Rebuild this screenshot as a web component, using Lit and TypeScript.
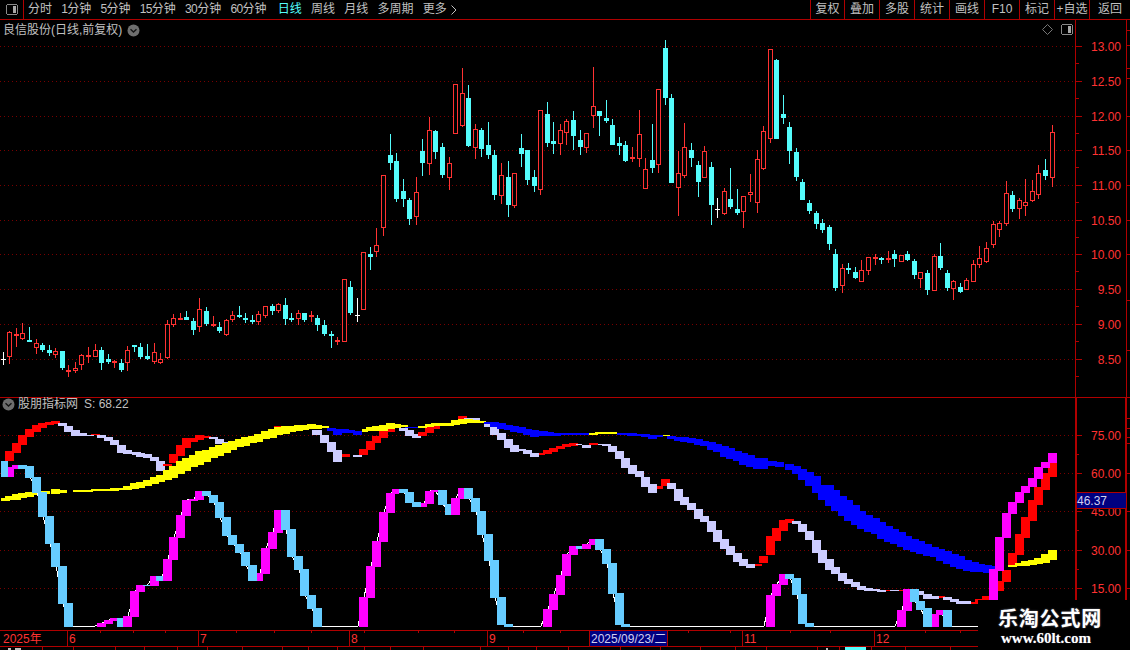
import { LitElement, html, css, svg } from "lit";
import { customElement } from "lit/decorators.js";

type C = [number, number, number, number, number, string];
// candle groups measured on 3x crops: x, body top, body bottom, wick top, wick bottom, colour
const G1: C[] = [
  [10,177,177,156,195,"w"],[28,97,170,94,192,"r"],[49,102,106,84,141,"r"],[67,99,117,69,120,"r"],[88,121,123,81,126,"c"],
  [109,130,144,117,162,"r"],[127,135,150,129,156,"c"],[148,150,160,135,168,"c"],[166,154,165,144,174,"r"],[187,153,204,153,210,"c"],
  [205,211,217,195,231,"r"],[226,205,212,186,219,"r"],[244,166,196,162,210,"r"],[265,166,171,141,189,"r"],[286,151,170,132,171,"r"],
  [304,150,189,141,210,"c"],[325,177,186,162,192,"c"],[343,184,188,180,204,"r"],[364,189,210,177,216,"c"],[382,151,190,138,213,"r"],
  [403,135,141,135,156,"c"],[421,141,171,129,177,"c"],[442,168,177,132,180,"c"],[463,157,186,129,192,"r"],[481,178,189,159,192,"r"],
  [502,72,174,60,177,"r"],[520,54,74,42,81,"r"],[541,54,57,39,60,"r"],[559,51,60,33,60,"c"],[580,63,90,54,105,"c"],
  [598,27,82,-6,96,"r"],[619,33,72,21,78,"c"],[640,72,78,48,81,"r"],[658,81,93,66,99,"c"],[679,61,105,58,108,"r"],
  [697,45,60,33,66,"r"],[718,45,51,18,54,"c"],[736,54,60,39,69,"c"],[757,60,66,45,72,"c"],[775,42,66,33,75,"r"],
  [796,18,48,18,54,"r"],[817,18,33,12,45,"c"],[835,12,33,9,39,"r"],[856,15,57,-6,75,"c"],[874,54,60,39,66,"c"],
  [895,39,57,30,75,"r"],[913,39,60,39,66,"c"],[934,45,51,33,66,"r"],[952,54,75,45,93,"c"],[973,75,102,60,108,"c"],
  [994,102,108,93,144,"c"],[1012,120,126,111,135,"r"],
];
const G2: C[] = [
  [133,178,365,178,365,"r"],[151,201,279,183,285,"c"],[172,286,286,234,306,"w"],[190,97,269,97,269,"r"],[211,102,111,81,150,"c"],[229,76,95,24,111,"r"],
];
const G3: C[] = [
  [10,436,593,436,618,"r"],[31,375,399,312,420,"c"],[49,393,507,369,516,"c"],[70,483,507,447,531,"c"],[88,510,567,504,585,"c"],
  [109,487,560,441,585,"r"],[127,363,399,327,438,"c"],[148,301,401,261,435,"r"],[166,303,366,300,387,"c"],[187,351,435,339,444,"c"],
  [208,400,443,381,480,"r"],[226,163,311,163,311,"r"],[247,190,287,114,291,"r"],[265,204,348,165,351,"c"],[286,298,353,282,387,"r"],
  [304,300,357,294,381,"c"],[325,345,375,276,387,"c"],[343,375,495,361,510,"c"],[364,436,497,399,522,"r"],[385,441,525,393,561,"c"],
  [403,430,527,430,534,"r"],[424,354,372,312,411,"c"],[442,360,450,360,465,"c"],[463,441,468,420,486,"c"],[481,241,479,241,495,"r"],
  [502,252,339,216,351,"c"],[520,333,342,276,372,"c"],[541,301,341,282,375,"r"],[559,274,308,267,345,"r"],[580,270,318,243,360,"c"],
  [601,330,351,300,375,"c"],[619,310,353,310,369,"r"],[640,229,257,111,294,"r"],[658,243,258,243,318,"c"],[679,264,273,210,279,"c"],
  [697,285,345,267,345,"c"],[718,339,348,321,375,"c"],[736,345,393,333,396,"c"],[757,382,388,351,396,"r"],[778,313,386,240,411,"r"],
  [796,418,476,384,476,"r"],[817,390,414,282,429,"c"],[835,178,404,178,429,"r"],[856,54,204,30,225,"c"],[874,204,459,193,459,"c"],
  [895,430,473,363,558,"r"],[913,352,437,279,444,"r"],[934,360,384,339,411,"c"],[955,405,456,393,501,"c"],[973,364,443,348,443,"r"],
  [994,411,525,396,585,"c"],[1012,538,538,504,564,"w"],
];
const G4: C[] = [
  [13,484,551,475,556,"r"],[31,507,531,414,537,"c"],[52,537,549,477,555,"c"],[70,499,545,499,594,"r"],[91,487,494,432,516,"r"],
  [112,388,518,361,549,"r"],[130,304,416,289,419,"r"],[151,58,328,58,339,"r"],[169,90,327,87,327,"c"],[190,252,264,195,282,"c"],
  [208,291,363,276,402,"c"],[229,366,441,354,453,"c"],[247,456,510,447,510,"c"],[268,519,543,510,552,"c"],[289,549,582,543,597,"c"],
  [307,579,600,567,609,"c"],[328,591,642,585,660,"c"],[346,672,774,657,783,"c"],[367,715,767,702,789,"r"],[385,714,720,699,732,"c"],
  [406,726,744,711,747,"c"],[424,721,755,690,755,"r"],[445,682,722,682,735,"r"],[466,681,687,672,705,"r"],[484,684,690,681,702,"c"],
  [505,684,690,663,699,"r"],[523,672,687,660,711,"c"],[544,676,695,676,695,"r"],[562,672,690,663,693,"c"],[583,693,735,687,747,"c"],
  [601,727,746,727,774,"r"],[622,729,780,720,795,"c"],[643,679,782,673,782,"r"],[661,678,714,639,720,"c"],[682,729,774,720,783,"c"],
  [700,754,777,750,810,"r"],[721,771,786,759,789,"c"],[739,751,779,745,779,"r"],[760,703,755,690,755,"r"],[778,685,704,648,714,"r"],
  [799,655,695,636,699,"r"],[820,583,644,574,654,"r"],[838,580,599,574,621,"r"],[859,490,581,453,588,"r"],[877,495,537,483,546,"c"],
  [898,511,536,505,567,"r"],[916,517,527,447,558,"r"],[937,484,512,450,516,"r"],[955,430,494,405,507,"r"],[976,420,438,387,450,"c"],
  [997,307,445,285,471,"r"],
];
const conv = (g: C[], x0: number, y0: number): C[] =>
  g.map(([x, a, b, c, d, k]) => [Math.floor(x0 + x / 3), Math.round(y0 + a / 3), Math.round(y0 + b / 3), Math.round(y0 + c / 3), Math.round(y0 + d / 3), k] as C);
const CANDLES: C[] = [...conv(G1, 0, 300), ...conv(G2, 300, 220), ...conv(G3, 380, 30), ...conv(G4, 720, 30)];

type S = [number, number, number, number];
const col = { y: "#ffff00", b: "#0000ff", r: "#ff0000", l: "#ccccff", m: "#ff00ff", s: "#66ccff" } as Record<string, string>;
const run = (k: string, rows: S[]) => rows.map((r) => [...r, k] as [number, number, number, number, string]);

const SERIES_B = [
  ...run("r", [[5,14,451,461],[12,21,443,453],[18,27,435,445],[25,34,429,437],[32,41,425,432],[38,47,423,428],[45,54,422,425],[51,60,421,424]]),
  ...run("l", [[58,67,423,426],[64,73,426,432],[71,80,430,436],[78,87,433,436],[85,94,435,436]]),
  ...run("r", [[91,100,434,435]]),
  ...run("l", [[97,106,435,438],[104,113,437,441],[110,119,440,445],[117,126,445,453],[123,132,450,454],[132,141,452,455],[136,145,453,457],[143,152,454,458],[150,159,457,461],[156,165,461,471]]),
  ...run("r", [[163,172,464,466],[169,178,454,463],[176,185,445,456],[182,191,438,448],[189,198,438,442],[195,204,435,440],[202,211,436,438]]),
  ...run("l", [[209,218,437,439],[215,224,439,444],[222,231,442,444]]),
  ...run("r", [[274,287,426,427]]),
  ...run("l", [[312,322,430,435],[320,329,435,443],[327,336,442,452],[333,342,450,462]]),
  ...run("r", [[342,350,454,457]]),
  ...run("l", [[353,362,455,457]]),
  ...run("r", [[359,368,449,455],[366,375,441,450],[372,381,436,443],[379,388,430,438],[388,395,429,432]]),
  ...run("l", [[399,408,428,431],[405,414,430,436],[412,421,434,438]]),
  ...run("r", [[418,427,432,436],[425,434,427,433],[431,440,426,429],[458,467,416,419]]),
  ...run("l", [[464,480,418,420],[484,490,423,427],[490,499,427,435],[497,506,433,440],[504,513,439,448],[510,519,445,452],[519,526,449,451],[523,532,450,454],[530,539,453,457]]),
  ...run("r", [[539,545,453,455],[543,552,450,454],[549,558,448,452],[556,565,446,449],[562,571,444,447],[569,578,443,446]]),
  ...run("l", [[576,582,444,445],[582,591,445,448]]),
  ...run("r", [[589,598,443,445]]),
  ...run("l", [[598,607,444,445],[602,611,444,446],[608,617,446,452],[615,624,451,459],[621,630,458,468],[628,637,465,474],[635,644,471,477],[641,650,477,487],[648,657,484,493]]),
  ...run("r", [[657,663,486,489],[661,670,479,486]]),
  ...run("l", [[667,676,483,489],[674,683,489,501],[680,689,497,505],[687,696,503,510],[694,703,509,519],[700,709,516,522],[707,716,521,532],[713,722,530,542],[720,729,539,549],[726,735,546,555],[733,742,553,562],[739,748,559,566],[746,755,564,568]]),
  ...run("r", [[755,762,564,566],[759,768,556,563],[766,775,536,555],[772,781,528,541],[779,788,520,531],[785,794,519,523]]),
  ...run("l", [[792,801,521,524],[798,807,524,532],[805,814,531,540],[812,821,540,553],[818,827,550,563],[825,834,559,570],[831,840,567,574],[838,847,573,581],[844,853,579,584],[851,860,582,587],[857,866,586,590],[864,873,588,591],[871,880,589,591],[877,886,590,592]]),
  ...run("r", [[886,890,590,591]]),
  ...run("l", [[890,899,590,591],[911,924,591,595],[923,932,594,599],[932,939,596,599]]),
  ...run("r", [[899,907,590,591],[939,945,596,598]]),
  ...run("l", [[943,952,597,600],[950,959,599,602],[956,965,601,604],[963,971,601,604]]),
  ...run("r", [[971,978,602,604],[975,984,599,604],[982,991,596,601],[989,998,588,600],[995,1004,581,591],[1002,1011,570,582],[1008,1017,553,567],[1015,1024,534,555],[1021,1030,517,538],[1028,1037,500,521],[1034,1043,487,505],[1041,1050,473,490],[1048,1057,463,477]]),
];

const SERIES_A = [
  ...run("y", [[1,10,498,501],[5,14,496,500],[12,21,494,500],[18,27,493,498],[25,34,492,497],[32,41,492,495],[41,50,491,494],[51,60,489,494],[58,67,490,493],[73,93,490,492],[91,100,489,491],[100,110,489,491],[110,119,488,491],[117,126,488,490],[123,132,486,490],[130,139,483,489],[136,145,482,488],[143,152,480,486],[150,159,477,484],[156,165,475,482],[163,172,470,480],[169,178,466,478],[176,185,461,474],[182,191,458,471],[189,198,455,467],[195,204,451,465],[202,211,450,462],[209,218,447,458],[215,224,445,456],[222,231,443,453],[228,237,441,450],[235,244,439,447],[241,250,437,446],[248,257,436,443],[254,263,434,442],[261,270,431,439],[268,277,429,438],[274,283,427,435],[281,290,426,434],[287,296,426,432],[294,303,425,431],[300,309,425,430],[307,316,424,429],[313,322,425,429],[320,329,426,428]]),
  ...run("b", [[327,336,428,431],[333,342,429,435],[340,349,429,433],[346,355,430,433],[353,362,431,435]]),
  ...run("y", [[362,368,429,432],[366,375,427,431],[372,381,426,431],[379,388,425,431],[386,395,423,429],[392,401,424,428],[399,408,425,427]]),
  ...run("b", [[405,418,427,428]]),
  ...run("y", [[418,427,426,428],[425,434,424,427],[431,440,423,426],[438,447,423,426],[445,454,423,426],[451,460,420,425],[458,467,419,424],[464,473,419,423],[471,480,420,423],[477,486,421,423]]),
  ...run("b", [[484,493,422,424],[490,499,422,427],[497,506,423,429],[504,513,425,430],[510,519,426,432],[517,526,427,433],[523,532,429,435],[530,539,430,437],[539,548,431,436],[545,554,432,436],[552,561,433,436],[558,567,433,435],[565,574,433,435],[572,581,433,435],[580,589,433,435]]),
  ...run("y", [[589,598,433,435],[595,604,432,434],[603,617,432,434]]),
  ...run("b", [[617,627,433,435],[627,637,433,436],[637,641,434,436],[641,650,434,437],[648,657,435,439],[655,663,435,437]]),
  ...run("y", [[663,670,435,436]]),
  ...run("b", [[667,676,436,439],[674,683,437,441],[680,689,437,442],[687,696,438,443],[694,703,439,445],[700,709,441,446],[707,716,442,450],[713,722,444,452],[720,729,446,457],[726,735,448,459],[733,742,451,461],[739,748,453,465],[746,755,455,467],[753,762,458,469],[755,768,458,469],[762,771,461,466],[768,777,461,466],[775,784,462,467],[785,794,464,470],[792,801,466,474],[798,807,469,480],[805,814,472,486],[812,821,476,493],[818,827,485,500],[825,834,485,506],[831,840,490,511],[838,847,496,516],[844,853,500,521],[851,860,505,525],[857,866,511,529],[864,873,515,532],[871,880,518,534],[877,886,522,539],[884,893,526,542],[890,899,529,544],[897,906,532,547],[903,912,536,550],[910,919,539,552],[916,925,541,554],[923,932,544,556],[930,939,547,557],[936,945,549,561],[943,952,551,564],[950,959,554,567],[956,965,556,569],[963,972,560,571],[970,979,562,572],[976,985,564,572],[983,992,565,573],[990,999,566,570],[997,1004,567,571]]),
  ...run("y", [[1008,1017,565,567],[1015,1024,563,566],[1021,1030,561,566],[1028,1037,560,565],[1034,1043,558,564],[1041,1050,554,563],[1048,1057,550,560]]),
];

const SERIES_C = [
  ...run("s", [[1,8,461,477]]),
  ...run("m", [[8,14,467,477],[12,18,465,469]]),
  ...run("s", [[18,27,465,469],[25,34,466,478],[32,41,477,493],[38,47,492,517],[45,54,516,544],[51,60,543,567],[58,67,566,604],[64,73,603,627]]),
  ...run("m", [[97,106,623,627],[104,113,620,624],[110,117,618,621]]),
  ...run("s", [[117,126,618,627]]),
  ...run("m", [[123,132,616,627],[130,139,591,617],[136,145,585,592]]),
  ...run("s", [[143,150,585,586]]),
  ...run("m", [[150,159,576,586]]),
  ...run("s", [[156,165,576,581]]),
  ...run("m", [[163,172,559,581],[169,178,537,560],[176,185,515,538],[182,191,500,516],[189,198,499,501],[195,204,491,500]]),
  ...run("s", [[202,211,491,496],[209,218,495,503],[215,224,502,518],[222,231,517,536],[228,237,535,545],[235,244,544,553],[241,250,552,566],[248,257,565,581]]),
  ...run("m", [[257,263,573,581],[261,270,548,574],[268,277,532,549],[274,283,510,533]]),
  ...run("s", [[281,290,510,530],[287,296,529,557],[294,303,556,570],[300,309,569,596],[307,316,595,609],[313,322,608,627]]),
  ...run("m", [[359,368,597,627],[366,375,566,598],[372,381,541,567],[379,388,512,542],[386,395,493,513],[392,399,489,494]]),
  ...run("s", [[399,408,489,493],[405,414,492,503],[412,421,502,507]]),
  ...run("m", [[421,427,503,507],[425,434,491,504],[431,438,490,492]]),
  ...run("s", [[438,447,490,505],[445,454,504,515]]),
  ...run("m", [[451,460,498,515],[458,464,488,499]]),
  ...run("s", [[464,473,488,499],[471,480,498,512],[477,486,511,535],[484,493,534,561],[490,499,560,598],[497,506,597,625],[504,513,624,627]]),
  ...run("m", [[543,552,609,627],[549,558,594,610],[556,565,575,595],[562,571,554,576],[569,578,546,555]]),
  ...run("s", [[576,585,546,549]]),
  ...run("m", [[582,591,544,549],[589,595,539,545]]),
  ...run("s", [[595,604,539,550],[602,611,549,564],[608,617,563,594],[615,624,593,625],[621,630,624,627]]),
  ...run("m", [[766,775,595,627],[772,781,584,596],[779,788,574,585]]),
  ...run("s", [[785,794,574,579],[792,801,578,595],[798,807,594,624],[805,814,623,627]]),
  ...run("m", [[897,906,610,627],[903,912,589,611]]),
  ...run("s", [[910,919,589,602],[916,925,601,610],[923,932,608,627]]),
  ...run("m", [[932,939,614,627],[936,943,610,615]]),
  ...run("s", [[943,952,610,627]]),
  ...run("m", [[989,998,569,600],[995,1004,537,571],[1002,1011,513,538],[1008,1017,502,514],[1015,1024,492,503],[1021,1030,486,493],[1028,1037,478,487],[1034,1043,467,479],[1041,1050,462,468],[1048,1057,453,463]]),
];

// white line running behind the magenta / blue sticks, with flat stretches on the floor
const FLOOR: [number, number][] = [[73,626],[95,626],[322,626],[358,626],[513,626],[541,626],[630,626],[764,626],[814,626],[895,626],[952,626],[978,626]];
const linePts = () => {
  const pts: [number, number][] = [...FLOOR];
  for (const [a, b, t, bt, k] of SERIES_C) {
    if (a < 25 || a > 985) continue;
    pts.push([Math.round((a + b) / 2), k === "m" ? t : bt - 1]);
  }
  pts.sort((p, q) => p[0] - q[0]);
  return pts.map((p) => p.join(",")).join(" ");
};
const LINE = linePts();

const PRICE_GRID = [46, 81, 116, 150, 185, 220, 254, 289, 324, 359];
const PRICE_LABELS = ["13.00", "12.50", "12.00", "11.50", "11.00", "10.50", "10.00", "9.50", "9.00", "8.50"];
const IND_GRID = [435, 473, 511, 550, 588];
const IND_LABELS = ["75.00", "60.00", "45.00", "30.00", "15.00"];
const MONTHS: [number, string][] = [[67,"6"],[198,"7"],[349,"8"],[487,"9"],[742,"11"],[874,"12"]];
const MINOR = [100,133,165,236,274,311,364,418,454,523,560,688,730,790,830,925,960];
const LOW = [42,73,115,144,177,207,242,282,308,337,364,390,423,480,508,536,568,620,660,700,735,766,817,839,871,905,950];
const EDGE_TICKS = [30, 45, 68, 78, 116, 150, 185, 220, 254, 300, 350, 418, 428, 437, 443, 473, 511, 550, 588];

@customElement("app-root")
export class AppRoot extends LitElement {
  static styles = css`
    :host { display: block; width: 1130px; height: 650px; background: #000; position: relative; overflow: hidden;
      font-family: "Liberation Sans", "Noto Sans CJK SC", sans-serif; font-size: 12px; color: #c0c0c0; }
    .toolbar { display: flex; height: 19px; border-bottom: 1px solid #b00000; box-sizing: content-box; line-height: 19px; }
    .toggle { width: 23px; display: flex; align-items: center; justify-content: center; border-right: 1px solid #b00000; }
    .tabs { display: flex; gap: 9.25px; padding-left: 4px; flex: 1; align-items: center; white-space: nowrap; }
    .tabs .n { letter-spacing: -0.67px; }
    .tabs .on { color: #54fcfc; margin-left: 2px; }
    .tabs .more { display: flex; align-items: center; gap: 4px; }
    .btns { display: flex; }
    .btn { width: 34px; box-sizing: border-box; border-left: 1px solid #b00000; text-align: center; white-space: nowrap; }
    .btn + .btn { width: 35px; }
    .btn:last-child { width: 41px; }
    .panel { position: relative; display: block; }
    .panel svg { display: block; }
    .price { height: 377px; }
    .ind { height: 233px; }
    .time { height: 20px; }
    .head { position: absolute; left: 3px; top: 2px; display: flex; align-items: center; gap: 5px; line-height: 16px; }
    .ind .head { top: -1px; left: 2px; gap: 3px; }
    .vals { margin-left: 3px; }
    .tools { position: absolute; left: 1042px; top: 4px; display: flex; gap: 8px; align-items: center; }
    .mark { position: absolute; left: 978px; top: 600px; width: 152px; height: 50px; background: #000; box-sizing: border-box;
      padding: 6px 0 0 20px; color: #fff; }
    .mark .cn { font: 700 20px/24px "Noto Sans CJK SC", sans-serif; letter-spacing: 0.8px; text-shadow: 0 0 2px #667; white-space: nowrap; }
    .mark .en { font: 700 15px/16px "Liberation Serif", serif; margin-left: 3px; text-shadow: 0 0 1px #667; white-space: nowrap; }
    text { font-family: "Liberation Sans", "Noto Sans CJK SC", sans-serif; font-size: 12px; }
  `;

  private grid(ys: number[]) {
    return ys.map((y) => svg`<line x1="0" x2="1075" y1=${y + 0.5} y2=${y + 0.5} stroke="#780000" stroke-dasharray="1 3" shape-rendering="auto" />`);
  }

  private candle(c: C) {
    const [x, t, b, wt, wb, k] = c;
    if (k === "w") {
      return svg`<rect x=${x} y=${wt} width="1" height=${wb - wt} fill="#fff" /><rect x=${x - 2} y=${t} width="5" height="1" fill="#fff" />`;
    }
    if (k === "c") {
      return svg`<rect x=${x} y=${wt} width="1" height=${wb - wt} fill="#54fcfc" /><rect x=${x - 2} y=${t} width="5" height=${Math.max(b - t, 2)} fill="#54fcfc" />`;
    }
    return svg`<rect x=${x} y=${wt} width="1" height=${Math.max(t - wt, 0)} fill="#ff3232" />
      <rect x=${x} y=${b} width="1" height=${Math.max(wb - b, 0)} fill="#ff3232" />
      <rect x=${x - 1.5} y=${t + 0.5} width="4" height=${Math.max(b - t - 1, 1)} fill="#000" stroke="#ff3232" />`;
  }

  private sticks(rows: [number, number, number, number, string][]) {
    return rows.map(([a, b, t, bt, k]) => svg`<rect x=${a} y=${t} width=${b - a} height=${bt - t} fill=${col[k]} />`);
  }

  private axis(ys: number[], labels: string[], gap: number) {
    return ys.map((y, i) => svg`
      <rect x="1076" y=${y} width="6" height="1" fill="#b00000" />
      <rect x="1076" y=${y + gap} width="3" height="1" fill="#b00000" />
      <text x="1121" y=${y + 5} text-anchor="end" fill="#ff3232">${labels[i]}</text>`);
  }

  private chevron() {
    return html`<svg width="13" height="13" viewBox="0 0 13 13">
      <circle cx="6.5" cy="6.5" r="6" fill="#6e6e6e" />
      <path d="M3.5 5.2 L6.5 8 L9.5 5.2" fill="none" stroke="#151515" stroke-width="1.4" />
    </svg>`;
  }

  private toggle() {
    return html`<svg width="12" height="11" viewBox="0 0 12 11" shape-rendering="crispEdges">
      <rect x="0.5" y="0.5" width="11" height="10" rx="2" fill="#000" stroke="#8a8a8a" />
      <rect x="7" y="2" width="3" height="7" fill="#a8a8a8" />
    </svg>`;
  }

  // digits in the tab labels are set a little tighter than the CJK part
  private tab(t: string) {
    const m = t.match(/^(\d+)(.*)$/);
    return m ? html`<span><span class="n">${m[1]}</span>${m[2]}</span>` : html`<span>${t}</span>`;
  }

  render() {
    const tabs = ["分时", "1分钟", "5分钟", "15分钟", "30分钟", "60分钟"];
    const tabs2 = ["周线", "月线", "多周期"];
    const btns = ["复权", "叠加", "多股", "统计", "画线", "F10", "标记", "+自选", "返回"];
    return html`
      <div class="toolbar">
        <div class="toggle">${this.toggle()}</div>
        <div class="tabs">
          ${tabs.map((t) => this.tab(t))}
          <span class="on">日线</span>
          ${tabs2.map((t) => this.tab(t))}
          <span class="more">更多
            <svg width="6" height="10" viewBox="0 0 6 10"><path d="M0.5 0.5 L5 5 L0.5 9.5" fill="none" stroke="#c0c0c0" /></svg>
          </span>
        </div>
        <div class="btns">${btns.map((b) => html`<div class="btn">${b}</div>`)}</div>
      </div>

      <section class="panel price">
        <svg width="1130" height="377" viewBox="0 20 1130 377" shape-rendering="crispEdges">
          ${this.grid(PRICE_GRID)}
          ${CANDLES.map((c) => this.candle(c))}
          <rect x="1075" y="20" width="1" height="377" fill="#b00000" />
          <rect x="1126" y="20" width="1" height="377" fill="#b00000" />
          ${this.axis(PRICE_GRID, PRICE_LABELS, 17)}
          ${EDGE_TICKS.filter((y) => y < 397).map((y) => svg`<rect x="1127" y=${y} width="3" height="1" fill="#b00000" />`)}
        </svg>
        <div class="head">良信股份(日线,前复权) ${this.chevron()}</div>
        <div class="tools">
          <svg width="11" height="11" viewBox="0 0 11 11"><path d="M5.5 0.5 L10.5 5.5 L5.5 10.5 L0.5 5.5 Z" fill="none" stroke="#777" /></svg>
          ${this.toggle()}
        </div>
      </section>

      <section class="panel ind">
        <svg width="1130" height="233" viewBox="0 397 1130 233" shape-rendering="crispEdges">
          <rect x="0" y="396" width="1130" height="2" fill="#b00000" />
          ${this.grid(IND_GRID)}
          ${this.sticks(SERIES_B)}
          ${this.sticks(SERIES_A)}
          <polyline points=${LINE} fill="none" stroke="#fff" stroke-width="1" />
          ${this.sticks(SERIES_C)}
          <rect x="1075" y="397" width="2" height="233" fill="#b00000" />
          <rect x="1125" y="397" width="2" height="233" fill="#b00000" />
          ${this.axis(IND_GRID, IND_LABELS, 19)}
          ${EDGE_TICKS.filter((y) => y > 397).map((y) => svg`<rect x="1127" y=${y} width="3" height="1" fill="#b00000" />`)}
          <rect x="1076.5" y="492.5" width="50" height="16" fill="#000080" stroke="#b00000" />
          <text x="1077" y="505" fill="#d0d0f0">46.37</text>
        </svg>
        <div class="head">${this.chevron()} <span>股朋指标网</span><span class="vals">S: 68.22</span></div>
      </section>

      <section class="panel time">
        <svg width="1130" height="20" viewBox="0 630 1130 20" shape-rendering="crispEdges">
          <rect x="0" y="630" width="1130" height="1" fill="#b00000" />
          <rect x="0" y="646" width="1130" height="1" fill="#b00000" />
          <text x="3" y="643" fill="#ff3232">2025年</text>
          ${MONTHS.map(([x, t]) => svg`
            <rect x=${x} y="631" width="1" height="15" fill="#b00000" />
            <text x=${x + 2} y="643" fill="#ff3232">${t}</text>`)}
          ${MINOR.map((x) => svg`<rect x=${x} y="631" width="1" height="2" fill="#b00000" />`)}
          ${LOW.map((x) => svg`<rect x=${x} y="647" width="1" height="3" fill="#b00000" />`)}
          <rect x="589.5" y="630.5" width="78" height="16" fill="#000080" stroke="#b00000" />
          <text x="591" y="643" fill="#d0d0f0">2025/09/23/二</text>
          <rect x="8" y="648" width="3" height="2" fill="#c0c0c0" />
          <rect x="15" y="648" width="6" height="2" fill="#c0c0c0" />
          <rect x="826" y="648" width="2" height="2" fill="#c0c0c0" />
          <rect x="845" y="647" width="21" height="3" fill="#54fcfc" />
        </svg>
      </section>

      <div class="mark">
        <div class="cn">乐淘公式网</div>
        <div class="en">www.60lt.com</div>
      </div>
    `;
  }
}
